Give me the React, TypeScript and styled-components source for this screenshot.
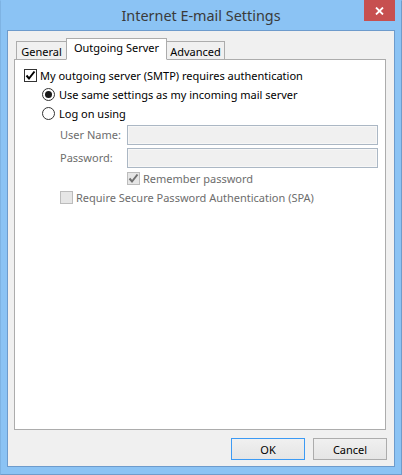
import React from "react";
import styled, { createGlobalStyle } from "styled-components";

const Global = createGlobalStyle`
  html, body { margin: 0; padding: 0; background: #ffffff; }
  body { font-family: "Noto Sans", "Open Sans", sans-serif; }
  * { box-sizing: border-box; }
`;

const Frame = styled.div`
  width: 402px;
  height: 475px;
  background: #8bc3f4;
  border: 1px solid #6f9ccb;
  border-top-color: #8bc3f4;
  border-left-color: #7eb3e3;
  display: flex;
  flex-direction: column;
  padding: 0 6px 7px 6px;
`;

const TitleBar = styled.div`
  height: 30px;
  display: grid;
  grid-template-columns: 1fr auto 1fr;
  align-items: start;
`;

const Title = styled.div`
  grid-column: 2;
  font-family: "Noto Sans", sans-serif;
  font-size: 14.4px;
  color: #3a3a3a;
  line-height: 20px;
  padding-top: 5px;
`;

const CloseButton = styled.div`
  grid-column: 3;
  justify-self: end;
  width: 31px;
  height: 21px;
  margin-top: -1px;
  background: #c75050;
  display: flex;
  align-items: center;
  justify-content: center;
`;

const Client = styled.div`
  flex: 1;
  background: #f0f0f0;
  border: 1px solid #6d9bcc;
  display: flex;
  flex-direction: column;
  padding: 8px 8px 6px 6px;
`;

const TabStrip = styled.div`
  display: flex;
  align-items: flex-end;
  height: 21px;
  padding-left: 2px;
  position: relative;
  z-index: 1;
  margin-bottom: -1px;
`;

const Tab = styled.div<{ $active?: boolean; $first?: boolean; $w: number }>`
  font-size: 11px;
  line-height: 16px;
  color: #000;
  width: ${(p) => p.$w}px;
  text-align: center;
  border: 1px solid #acacac;
  border-bottom: ${(p) => (p.$active ? "1px solid #ffffff" : "1px solid #acacac")};
  background: ${(p) => (p.$active ? "#ffffff" : "#f0f0f0")};
  height: ${(p) => (p.$active ? "22px" : "19px")};
  padding-top: ${(p) => (p.$active ? "1px" : "2px")};
  margin-left: ${(p) => (p.$first ? "0" : "-1px")};
  z-index: ${(p) => (p.$active ? 2 : 1)};
  position: relative;
  white-space: nowrap;
`;

const Panel = styled.div`
  height: 371px;
  background: #ffffff;
  border: 1px solid #acacac;
  padding: 6px 7px 0 9px;
  display: flex;
  flex-direction: column;
`;

const Row = styled.div<{ $indent?: number; $h?: number }>`
  display: flex;
  align-items: center;
  height: ${(p) => p.$h ?? 19}px;
  padding-left: ${(p) => p.$indent ?? 0}px;
  font-size: 11px;
  white-space: nowrap;
`;

const Label = styled.span<{ $disabled?: boolean }>`
  color: ${(p) => (p.$disabled ? "#6d6d6d" : "#000000")};
  margin-left: 3px;
`;

const FieldLabel = styled.span`
  color: #6d6d6d;
  width: 67px;
`;

const Box = styled.span<{ $disabled?: boolean }>`
  width: 13px;
  height: 13px;
  border: 1px solid ${(p) => (p.$disabled ? "#bcbcbc" : "#333333")};
  background: ${(p) => (p.$disabled ? "#e6e6e6" : "#ffffff")};
  display: inline-flex;
  align-items: center;
  justify-content: center;
  flex: none;
`;

const Radio = styled.span`
  width: 13px;
  height: 13px;
  border-radius: 50%;
  border: 1px solid #333333;
  background: #ffffff;
  display: inline-flex;
  align-items: center;
  justify-content: center;
  flex: none;
  margin-right: 1px;
`;

const Dot = styled.span`
  width: 7px;
  height: 7px;
  border-radius: 50%;
  background: #1a1a1a;
`;

const Input = styled.div`
  flex: 1;
  height: 20px;
  background: #f0f0f0;
  border: 1px solid #abb7c4;
  box-shadow: inset 0 0 0 1px #f7f7f7;
`;

const ButtonRow = styled.div`
  display: flex;
  justify-content: flex-end;
  gap: 8px;
  margin-top: 8px;
  margin-right: -1px;
`;

const Button = styled.div<{ $default?: boolean }>`
  width: 74px;
  height: 22px;
  border: 1px solid ${(p) => (p.$default ? "#3c9af4" : "#acacac")};
  background: linear-gradient(#f0f0f0, #e5e5e5);
  font-size: 11px;
  display: flex;
  align-items: center;
  justify-content: center;
  color: #000;
`;

const Check = ({ color }: { color: string }) => (
  <svg width="11" height="11" viewBox="0 0 11 11">
    <path d="M1.5 5.5 L4 8.5 L9.5 1.5" fill="none" stroke={color} strokeWidth="2" />
  </svg>
);

export default function App() {
  return (
    <>
      <Global />
      <Frame>
        <TitleBar>
          <Title>Internet E-mail Settings</Title>
          <CloseButton>
            <svg width="9" height="8" viewBox="0 0 9 8">
              <path d="M1 0.5 L8 7.5 M8 0.5 L1 7.5" stroke="#ffffff" strokeWidth="1.8" />
            </svg>
          </CloseButton>
        </TitleBar>
        <Client>
          <TabStrip>
            <Tab $first $w={51}>General</Tab>
            <Tab $active $w={101}>Outgoing Server</Tab>
            <Tab $w={59}>Advanced</Tab>
          </TabStrip>
          <Panel>
            <Row>
              <Box>
                <Check color="#000000" />
              </Box>
              <Label>My outgoing server (SMTP) requires authentication</Label>
            </Row>
            <Row $indent={18}>
              <Radio>
                <Dot />
              </Radio>
              <Label>Use same settings as my incoming mail server</Label>
            </Row>
            <Row $indent={18}>
              <Radio />
              <Label>Log on using</Label>
            </Row>
            <Row $indent={36} $h={23}>
              <FieldLabel>User Name:</FieldLabel>
              <Input />
            </Row>
            <Row $indent={36} $h={23}>
              <FieldLabel>Password:</FieldLabel>
              <Input />
            </Row>
            <Row $indent={103} $h={19}>
              <Box $disabled>
                <Check color="#707070" />
              </Box>
              <Label $disabled>Remember password</Label>
            </Row>
            <Row $indent={36} $h={19}>
              <Box $disabled />
              <Label $disabled>Require Secure Password Authentication (SPA)</Label>
            </Row>
          </Panel>
          <ButtonRow>
            <Button $default>OK</Button>
            <Button>Cancel</Button>
          </ButtonRow>
        </Client>
      </Frame>
    </>
  );
}
